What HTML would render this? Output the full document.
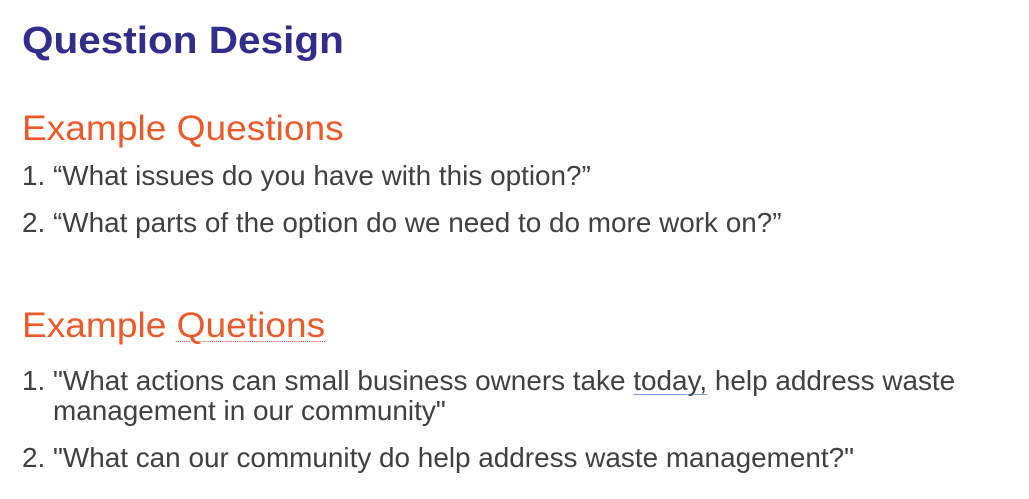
<!DOCTYPE html>
<html><head><meta charset="utf-8"><style>
html,body{margin:0;padding:0;background:#fff;width:1029px;height:499px;overflow:hidden;position:relative;font-family:"Liberation Sans",Arial,sans-serif}
div{position:absolute;white-space:nowrap;line-height:1;transform-origin:0 0}
.t{left:22px;top:22px;font-size:38px;font-weight:bold;color:#302d8c;transform:scaleX(1.066)}
.h{left:22px;font-size:35px;color:#ec5a2a;transform:scaleX(1.06)}
.b{left:22px;font-size:27.5px;color:#404040;transform:scaleX(1.014)}
.i{left:53px}
.bl{text-decoration:underline #7a9ad8;text-decoration-thickness:1px;text-underline-offset:4px}
</style></head><body>
<div class="t">Question Design</div>
<div class="h" style="top:111px">Example Questions</div>
<div class="b" style="top:162px">1. “What issues do you have with this option?”</div>
<div class="b" style="top:209px">2. “What parts of the option do we need to do more work on?”</div>
<div class="h" style="top:308px">Example <span style="text-decoration:underline dotted #e0463a;text-decoration-thickness:1px;text-underline-offset:4px">Quetions</span></div>
<div class="b" style="top:367px">1. "What actions can small business owners take <span class="bl">today,</span> help address waste</div>
<div class="b i" style="top:397px">management in our community"</div>
<div class="b" style="top:444px">2. "What can our community do help address waste management?"</div>
</body></html>
